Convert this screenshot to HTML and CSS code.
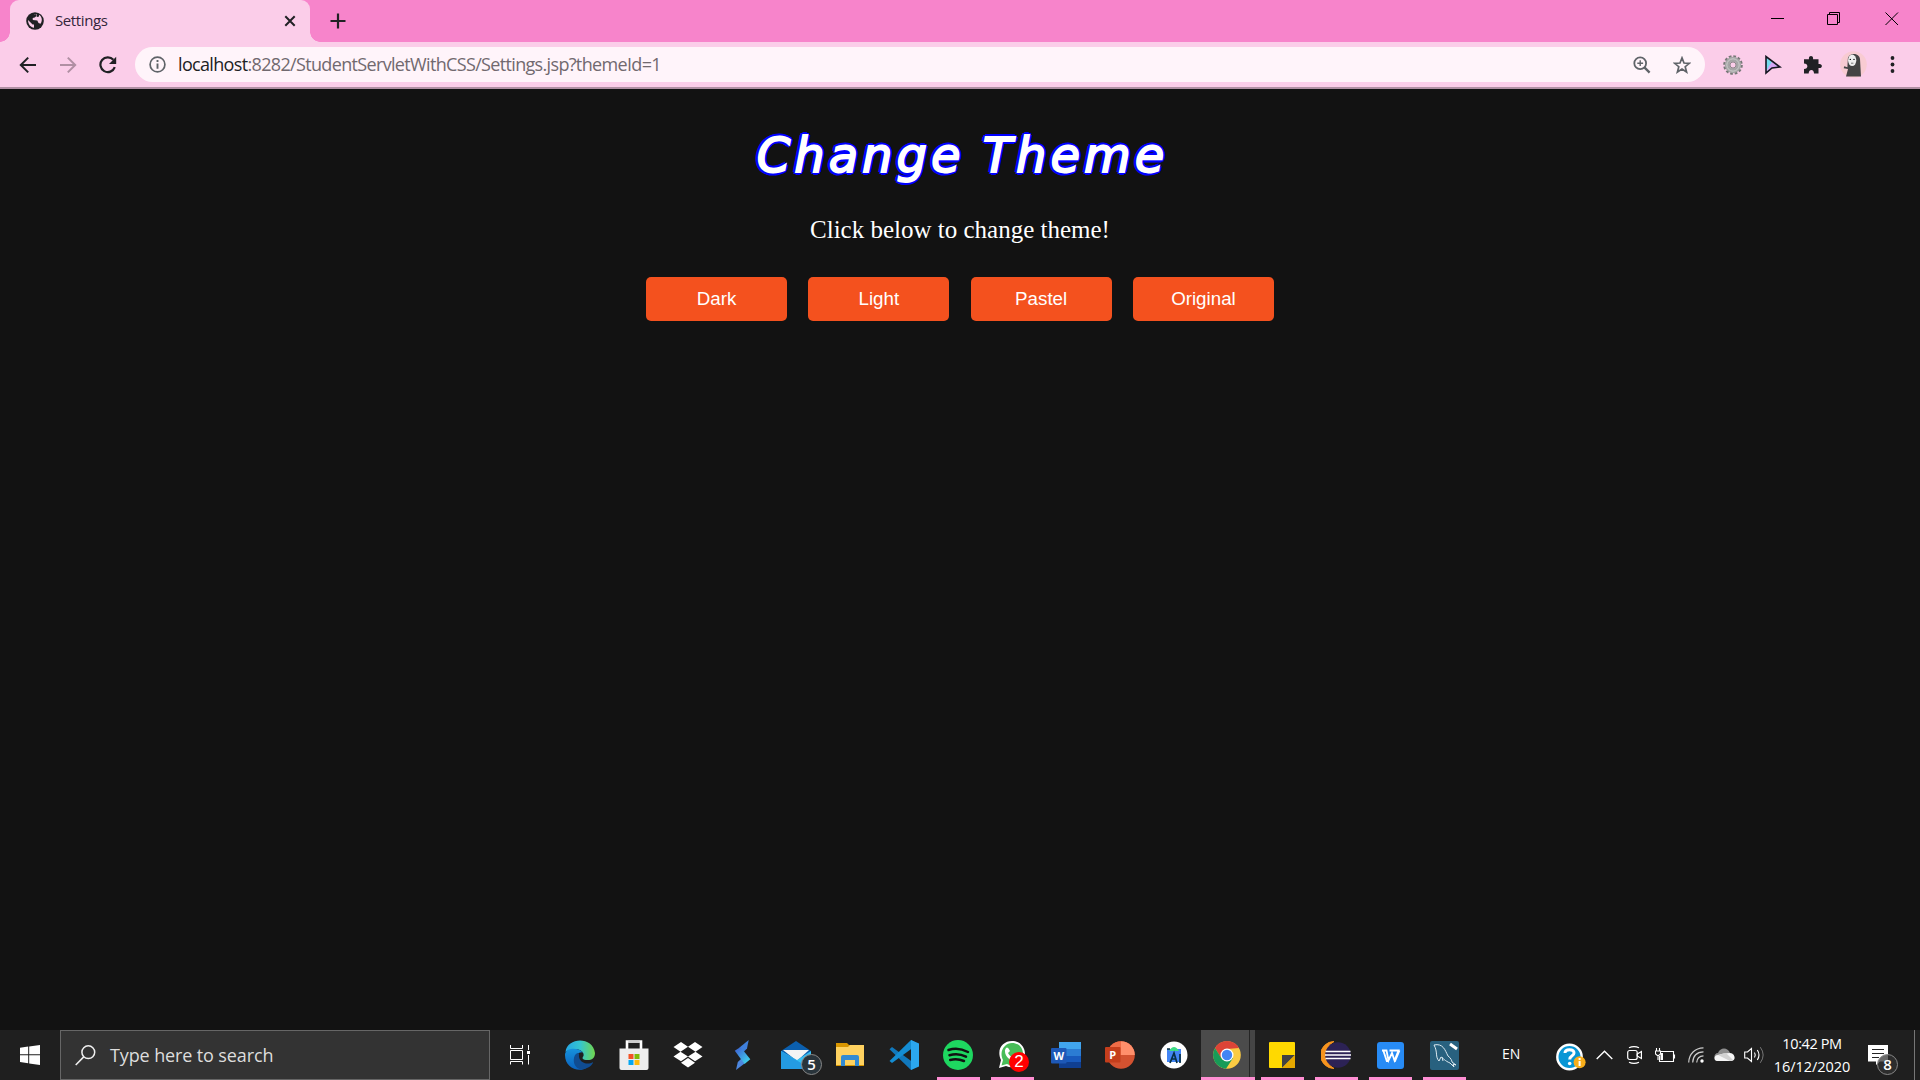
FILE: index.html
```html
<!DOCTYPE html>
<html lang="en">
<head>
<meta charset="utf-8">
<title>Settings</title>
<link rel="stylesheet" href="styles.css">
</head>
<body>
<div class="screen">
  <header class="tabstrip">
    <div class="tab">
      <svg class="globe" width="18" height="18" viewBox="0 0 18 18"><circle cx="9" cy="9" r="8.8" fill="#202124"/><path d="M2 8 L6.6 12.4 L8 12.4 L8 15.8 C4.8 15.4 2 12.5 2 8Z" fill="#fbcde9"/><path d="M8 2.2 C11 1.5 11 4.6 8.7 5.4 L6.7 6 L6.8 8 L11.3 8.5 L12.5 11 L14.5 11.8 C16.5 9 16.3 5.2 13.3 2.8 L12.7 4.7 L10.7 5 L10.8 2.2Z" fill="#fbcde9"/></svg>
      <span class="tab-title">Settings</span>
      <svg class="tab-close" width="12" height="12" viewBox="0 0 12 12"><path d="M1.3 1.3 10.7 10.7M10.7 1.3 1.3 10.7" stroke="#202124" stroke-width="2"/></svg>
    </div>
    <svg class="new-tab" width="16" height="16" viewBox="0 0 16 16"><path d="M8 .5V15.5M.5 8H15.5" stroke="#202124" stroke-width="2.2"/></svg>
    <div class="window-controls">
      <svg width="14" height="14" viewBox="0 0 14 14"><path d="M0 6.5H13" stroke="#000"/></svg>
      <svg width="14" height="14" viewBox="0 0 14 14"><path d="M.5 2.5H10.5V12.5H.5ZM2.5 2.5V.5H12.5V10.5H10.5" fill="none" stroke="#000"/></svg>
      <svg class="window-close" width="14" height="14" viewBox="0 0 14 14"><path d="M.5 .5 13 13M13 .5 .5 13" stroke="#000"/></svg>
    </div>
  </header>

  <nav class="toolbar">
    <div class="nav-buttons">
      <svg width="18" height="18" viewBox="0 0 18 18"><path d="M17 9H2M9.2 1.6 1.8 9 9.2 16.4" fill="none" stroke="#202124" stroke-width="2"/></svg>
      <svg width="18" height="18" viewBox="0 0 18 18"><path d="M1 9H16M8.8 1.6 16.2 9 8.8 16.4" fill="none" stroke="#b08fa3" stroke-width="2"/></svg>
      <svg width="18" height="18" viewBox="0 0 18 18"><path d="M14.4 3.8A7.4 7.4 0 1 0 15.8 11.2" fill="none" stroke="#202124" stroke-width="2.2"/><path d="M17.2 .8V8H10Z" fill="#202124"/></svg>
    </div>
    <div class="omnibox">
      <svg width="17" height="17" viewBox="0 0 17 17"><circle cx="8.5" cy="8.5" r="7.4" fill="none" stroke="#5f6368" stroke-width="1.7"/><path d="M8.5 4V5.9M8.5 7.4V12.8" stroke="#5f6368" stroke-width="1.9"/></svg>
      <span class="url"><span class="host">localhost</span>:8282/StudentServletWithCSS/Settings.jsp?themeId=1</span>
      <svg class="zoom-icon" width="18" height="18" viewBox="0 0 18 18"><circle cx="7.2" cy="7.2" r="5.9" fill="none" stroke="#5f6368" stroke-width="1.8"/><path d="M11.4 11.4 16.6 16.6" stroke="#5f6368" stroke-width="2.3"/><path d="M7.2 4.3V10.1M4.3 7.2H10.1" stroke="#5f6368" stroke-width="1.4"/></svg>
      <svg class="star-icon" width="18" height="18" viewBox="0 0 18 18"><path d="M9 1.9 11 7 16.4 7.3 12.2 10.7 13.6 16 9 13 4.4 16 5.8 10.7 1.6 7.3 7 7Z" fill="none" stroke="#5f6368" stroke-width="1.7"/></svg>
    </div>
    <div class="extensions">
      <svg width="22" height="22" viewBox="0 0 22 22"><circle cx="11" cy="11" r="8.3" fill="none" stroke="#777" stroke-width="3" stroke-dasharray="2.6 1.75"/><circle cx="11" cy="11" r="5.7" fill="none" stroke="#a6a6a6" stroke-width="5"/><circle cx="11" cy="11" r="6.2" fill="none" stroke="#ccc" stroke-width="1"/><circle cx="11" cy="11" r="3" fill="#fbcde9" stroke="#777" stroke-width=".8"/></svg>
      <svg class="pointer" width="18" height="20" viewBox="0 0 18 20"><path d="M2 2 8 7 6.5 11 2 16Z" fill="#74dced"/><path d="M8 7 16 12 8 13 2 18 5 11Z" fill="#d4a6f5"/><path d="M2 1.5V18L8 13 16 12Z" fill="none" stroke="#141620" stroke-width="1.6"/></svg>
      <svg width="18" height="18" viewBox="0 0 18 18"><path d="M0 3.3H5C4.1 -1 9.9 -1 9 3.3H14.5V8C19 7 19 13 14.5 12V17.6H10C10.2 12.7 4.5 12.7 4.7 17.6H0V13C4.5 13 4.5 7.5 0 7.5Z" fill="#202124"/></svg>
      <svg class="avatar" width="27" height="27" viewBox="0 0 27 27"><circle cx="13.5" cy="13.5" r="13.3" fill="#f8cbd2"/><path d="M6 25.5 8 18 3.7 17.2 4.2 15.3 7.4 16.3 7.8 8C8.5 1.4 19.2 1.4 20 8L21 25.5Z" fill="#444"/><ellipse cx="12.2" cy="9.3" rx="4.1" ry="5.8" fill="#eee"/><circle cx="10.3" cy="8.4" r=".7"/><circle cx="14" cy="8.4" r=".7"/><path d="M11 12.2H13.4" stroke="#777"/></svg>
      <svg width="5" height="17" viewBox="0 0 5 17"><g fill="#202124"><circle cx="2.5" cy="2" r="1.9"/><circle cx="2.5" cy="8.5" r="1.9"/><circle cx="2.5" cy="15" r="1.9"/></g></svg>
    </div>
  </nav>

  <main class="page">
    <h1>Change Theme</h1>
    <p>Click below to change theme!</p>
    <div class="themes">
      <button>Dark</button><button>Light</button><button>Pastel</button><button>Original</button>
    </div>
  </main>

  <footer class="taskbar">
    <div class="start"><svg width="20" height="20" viewBox="0 0 20 20"><path d="M0 2.7 8.2 1.5V9.3H0ZM9.2 1.4 20 0V9.3H9.2ZM0 10.3H8.2V18.2L0 17ZM9.2 10.3H20V20L9.2 18.4Z" fill="#fff"/></svg></div>
    <div class="search">
      <svg width="21" height="21" viewBox="0 0 21 21"><circle cx="13.3" cy="7.2" r="6.4" fill="none" stroke="#f0f0f0" stroke-width="1.5"/><path d="M8.7 11.9 .7 20" stroke="#f0f0f0" stroke-width="1.5"/></svg>
      <span>Type here to search</span>
    </div>
    <div class="task-view"><svg width="21" height="20" viewBox="0 0 21 20"><path d="M.5 0V3.5H12.5V0M.5 5.5H12.5V14.5H.5ZM.5 19.5V16.5H12.5V19.5M18.5 0V5M18.5 10V19.5" fill="none" stroke="#fff"/><path d="M17 6H20V9H17Z" fill="#fff"/></svg></div>
    <div class="apps">
      <div class="app"><svg width="30" height="30" viewBox="0 0 30 30"><defs><linearGradient id="edge-top"><stop offset="0" stop-color="#24a6e5"/><stop offset=".5" stop-color="#35c5cf"/><stop offset="1" stop-color="#70d64d"/></linearGradient><linearGradient id="edge-low" x2="0" y2="1"><stop stop-color="#1691dc"/><stop offset="1" stop-color="#0b61bd"/></linearGradient></defs><path d="M.5 12C2-3 28-4 30 13C30 19 26 20.5 21 20C17 19.7 17 18 18.5 16C20 9 8 7 .5 12Z" fill="url(#edge-top)"/><path d="M0 15C0 7 14 7 18.4 13C16 10.5 10 14 10 20C11 26 19 29 22 28C12 33 0 27 0 15Z" fill="url(#edge-low)"/><path d="M10 15C6 23 12 33 22 28C25 27 28 24 28 22C22 26 13 22 14 15C14 12 12 13 10 15Z" fill="#104c91"/></svg></div>
      <div class="app"><svg width="30" height="30" viewBox="0 0 30 30"><path d="M8 10V1.5H22V10" fill="none" stroke="#fff" stroke-width="2.6"/><path d="M9.3 1H20.7V3H9.3Z" fill="#ccc"/><path d="M.5 8.5H29.5V28Q29.5 30 27.5 30H2.5Q.5 30 .5 28Z" fill="#ededed"/><path d="M9.5 14H14.5V19H9.5Z" fill="#f35325"/><path d="M15.5 14H20.5V19H15.5Z" fill="#81bc06"/><path d="M9.5 20H14.5V25H9.5Z" fill="#05a6f0"/><path d="M15.5 20H20.5V25H15.5Z" fill="#ffba08"/></svg></div>
      <div class="app"><svg width="30" height="30" viewBox="0 0 30 30"><path d="M.5 7 8 2 15 6.7 7.5 11.7ZM15 6.7 22 2 29.5 7 22.5 11.7ZM.5 16.5 7.5 11.7 15 16.5 8 21.3ZM15 16.5 22.5 11.7 29.5 16.5 22 21.3ZM8 22.8 15 18.1 22 22.8 15 27.5Z" fill="#fff"/></svg></div>
      <div class="app"><svg width="30" height="30" viewBox="0 0 30 30"><defs><linearGradient id="ribbon" x2="1" y2="1"><stop offset=".2" stop-color="#3e72d7"/><stop offset="1" stop-color="#40e3ef"/></linearGradient></defs><path d="M21.7 0 20 8.5 16.5 12 12.5 7.5Z" fill="#3f80dc"/><path d="M9 30 10.8 22 14.5 18.5 17.5 23.5Z" fill="#4d87df"/><path d="M7.8 10.8 13.5 7 23.3 19.2 17.5 24Z" fill="url(#ribbon)"/></svg></div>
      <div class="app"><svg width="30" height="30" viewBox="0 0 30 30"><path d="M0 11 15 1 30 11V18H0Z" fill="#0b5fae"/><path d="M2 10H28L16 21Z" fill="#f4f4f4"/><path d="M0 11 16 20 30 11V29H0Z" fill="#36bff3"/><path d="M0 11 30 29H0Z" fill="#249be2"/></svg><span class="mail-badge">5</span></div>
      <div class="app"><svg width="30" height="30" viewBox="0 0 30 30"><path d="M1 3H12L14 5H29V26H1Z" fill="#d99600"/><path d="M1 7H13L15 5H29V25H1Z" fill="#ffd260"/><path d="M6 26V17Q6 15 8 15H22Q24 15 24 17V26H20V20H10V26Z" fill="#338bd2"/></svg></div>
      <div class="app"><svg width="30" height="30" viewBox="0 0 30 30"><path d="M.5 9.2 3 7 29 26 22 30Z" fill="#1178bc"/><path d="M.5 21 3 23 29 4 22 0Z" fill="#148dd3"/><path d="M22 0 30 3.5V26.5L22 30Z" fill="#2ba7ef"/></svg></div>
      <div class="app running"><svg width="30" height="30" viewBox="0 0 30 30"><circle cx="15" cy="15" r="15" fill="#1ed760"/><path d="M5.5 10Q15 6.5 25 12M6.5 15.2Q15 12.5 23 16.7M7.2 20Q14 18 21 21" fill="none" stroke="#111" stroke-width="2.5" stroke-linecap="round"/></svg></div>
      <div class="app running"><svg width="30" height="30" viewBox="0 0 30 30"><path d="M2 28 4 20C-1 9 6 1 15 1C23 1 28 7 28 14C28 24 18 30 9 26Z" fill="#fff"/><path d="M4.5 25.5 6 20C1.5 11 8 3 15 3C22 3 26 8 26 14C26 22 17 28 10 24Z" fill="#48bd58"/><path d="M9 8Q11 6 13 11L11 13Q13 17 17 18L19 16 23 18C22 25 7 20 8 10Z" fill="#fff"/></svg><span class="red-badge">2</span></div>
      <div class="app"><svg width="30" height="28" viewBox="0 0 30 28"><path d="M8 1H30V8H8Z" fill="#41a5ee"/><path d="M8 8H30V15H8Z" fill="#2b7cd3"/><path d="M8 15H30V21H8Z" fill="#185abd"/><path d="M8 21H30V27H8Z" fill="#103f91"/><rect x="0" y="7" width="15.5" height="15.5" rx="1" fill="#1d58b7"/><text class="logo-letter" x="7.8" y="18.7">W</text></svg></div>
      <div class="app"><svg width="30" height="28" viewBox="0 0 30 28"><circle cx="16" cy="14" r="13.8" fill="#d35230"/><path d="M16 .2V14H29.8A13.8 13.8 0 0 0 16 .2Z" fill="#ff8f6b"/><path d="M16 .2A13.8 13.8 0 0 0 2.2 14H16Z" fill="#ed6c47"/><rect y="6" width="15.5" height="15.5" rx="1" fill="#c43e1c"/><text class="logo-letter" x="7.8" y="18">P</text></svg></div>
      <div class="app"><svg width="28" height="28" viewBox="0 0 28 28"><circle cx="14" cy="14" r="13.5" fill="#fff"/><path d="M7 8H21V21H7Z" fill="#4285f4"/><path d="M9 10Q14 2 19 10Z" fill="#3ddc84"/><path d="M7 8H10M10 22 14 12 17 22M20 13V22M11.5 18H16" fill="none" stroke="#083042" stroke-width="1.7"/></svg></div>
      <div class="app chrome-app"><svg width="28" height="28" viewBox="0 0 28 28"><circle cx="14" cy="14" r="13.8" fill="#fbcb43"/><path d="M2 7A13.8 13.8 0 0 1 26 7L14 8 8 17Z" fill="#dc4437"/><path d="M2 7A13.8 13.8 0 0 0 13 27.8L20 17 8.5 17.5Z" fill="#179b58"/><circle cx="14" cy="14" r="6.5" fill="#fff"/><circle cx="14" cy="14" r="5.2" fill="#4285f4"/></svg></div>
      <div class="app running"><svg width="26" height="26" viewBox="0 0 26 26"><rect width="26" height="26" rx="1" fill="#ffd900"/><path d="M13 26V13H26Z" fill="#424242"/><path d="M13 26 26 13V26Z" fill="#e6a800"/></svg></div>
      <div class="app running"><svg width="30" height="28" viewBox="0 0 30 28"><path d="M13 .5A13.5 13.5 0 0 0 13 27.5C2 21 2 7 13 .5Z" fill="#f7941e" stroke="#f7941e"/><circle cx="17" cy="14" r="12.8" fill="#2c2255"/><path d="M4.5 10.5H29.5M4 14H30M4.5 17.5H29.5" stroke="#fff" stroke-width="1.7"/></svg></div>
      <div class="app running"><svg width="27" height="27" viewBox="0 0 27 27"><rect width="27" height="27" rx="3" fill="#278bf5"/><path d="M5 8.5H9.5L11.5 18.5 15 11 17.5 18.5 21.5 8.5H12.5M6.3 8.5 9.8 19H11.5M17 19H18L22.5 8.5" fill="none" stroke="#fff" stroke-width="1.8"/></svg></div>
      <div class="app running"><svg width="29" height="29" viewBox="0 0 29 29"><rect width="29" height="29" rx="2" fill="#28617f"/><path d="M4 4C13 2 15 9 18 15C21 17 22 20 22 21L26 24 23 23 24 26 20 22C15 20 13 17 11 16L9 20C5 16 8 11 4 4ZM12 16 13 20" fill="none" stroke="#dceaf1"/><path d="M20 3 27 8" stroke="#fff" stroke-width="3"/></svg></div>
    </div>
    <div class="tray">
      <span class="language">EN</span>
      <svg class="help" width="30" height="28" viewBox="0 0 30 28"><circle cx="13.5" cy="14" r="12.2" fill="#0896d5" stroke="#fff" stroke-width="2.4"/><path d="M9 10Q9 6.7 13.5 6.7Q18 6.7 18 10C18 13 13.7 12.5 13.7 16.5" fill="none" stroke="#fff" stroke-width="3"/><circle cx="13.7" cy="20.5" r="1.8" fill="#fff"/><circle cx="23.6" cy="19.3" r="6" fill="#f8ae1a"/><path d="M23.6 15V17M23.6 18V23" stroke="#fff" stroke-width="2"/></svg>
      <svg class="chevron" width="17" height="10" viewBox="0 0 17 10"><path d="M.7 9 8.5 1.2 16.3 9" fill="none" stroke="#fff" stroke-width="1.4"/></svg>
      <svg class="meet" width="16" height="18" viewBox="0 0 16 18"><rect x=".7" y="4.5" width="9.5" height="9" rx="2" fill="none" stroke="#fff" stroke-width="1.2"/><path d="M10.2 8 14.4 5.5V12.5L10.2 10ZM2 1.8Q7 -.6 12 1.8M2 16.2Q7 18.6 12 16.2" fill="none" stroke="#fff" stroke-width="1.2"/></svg>
      <svg class="battery" width="21" height="15" viewBox="0 0 21 15"><path d="M6 3.5H18.5V13.5H4.5V8M19.5 6.5V10.5M1.5 0V3M4.5 0V3M.5 3H5.5V6L3 8 .5 6ZM3 8V12" fill="none" stroke="#fff" stroke-width="1.1"/><path d="M5.5 5H8V12H5.5Z" fill="#fff"/></svg>
      <svg class="wifi" width="17" height="16" viewBox="0 0 17 16"><path d="M.7 15.5C1 7 7 1 15.5.8M4.7 15.5C5 9 9 5 15.5 4.8M8.7 15.5C9 11 11 9 15.5 8.8" fill="none" stroke="#ccc" stroke-width="1.2"/><circle cx="14" cy="14" r="1.7" fill="#fff"/></svg>
      <svg class="cloud" width="21" height="14" viewBox="0 0 21 14"><path d="M3 12C-1 11 0 5 4 5C6-1 14-1 16 5C20 5 21 9 19 11Z" fill="#8f8f8f"/><path d="M3 13C-1 12 0 7 4 7Q9 5 16 5C22 6 22 13 17 13Z" fill="#f5f5f5"/><path d="M4 7 12 5 19 12 16 13Z" fill="#d2d2d2"/></svg>
      <svg class="speaker" width="21" height="18" viewBox="0 0 21 18"><path d="M.7 6H3.5L7.5 2.5V15.5L3.5 12H.7Z" fill="none" stroke="#fff" stroke-width="1.1"/><path d="M10.5 6.5Q12 9 10.5 11.5M13.3 4Q16.7 9 13.3 14" fill="none" stroke="#fff" stroke-width="1.1"/><path d="M16.3 1.2Q22 9 16.3 16.8" fill="none" stroke="#777"/></svg>
      <div class="clock"><span>10:42 PM</span><span class="date">16/12/2020</span></div>
      <div class="notifications"><svg width="20" height="21" viewBox="0 0 20 21"><path d="M0 0H20V16.5H12L8 20V16.5H0Z" fill="#fff"/><path d="M4 4.5H16M4 8.5H16M4 12.5H11" stroke="#242424" stroke-width="1.1"/></svg><span class="note-badge">8</span></div>
      <div class="show-desktop"></div>
    </div>
  </footer>
</div>
</body>
</html>
```
FILE: styles.css
```css
* { box-sizing: border-box; }
body { margin: 0; background: #121212; color: #fff; }
svg { display: block; flex: none; }
.screen { width: 1920px; height: 1080px; display: flex; flex-direction: column; overflow: hidden; }

.tabstrip { height: 42px; flex: none; background: #f784cb; display: flex; align-items: center; padding-left: 10px; }
.tab { position: relative; width: 300px; height: 42px; background: #fbcde9; border-radius: 9px 9px 0 0; display: flex; align-items: center; padding: 0 14px 0 16px; font: 15px "Open Sans", sans-serif; color: #33263a; }
.tab::before, .tab::after { content: ""; position: absolute; bottom: 0; width: 10px; height: 10px; }
.tab::before { left: -10px; background: radial-gradient(circle at 0 0, #f784cb 9.5px, #fbcde9 10px); }
.tab::after { right: -10px; background: radial-gradient(circle at 100% 0, #f784cb 9.5px, #fbcde9 10px); }
.tab-title { margin: -2px 0 0 11px; letter-spacing: -.4px; }
.tab-close { margin-left: auto; }
.new-tab { margin-left: 20px; }
.window-controls { display: flex; gap: 42px; margin: -5px 0 0 auto; padding-right: 21px; }
.window-close { margin-left: 2px; }

.toolbar { height: 47px; flex: none; background: #fbcde9; border-bottom: 2px solid #b08fa3; display: flex; align-items: center; padding-left: 19px; }
.nav-buttons { display: flex; gap: 22px; width: 116px; }
.omnibox { width: 1570px; height: 35px; border-radius: 18px; background: #fff4fa; display: flex; align-items: center; padding: 0 14px; }
.url { margin: -2px 0 0 12px; font: 18px "Open Sans", sans-serif; letter-spacing: -.66px; color: #71696f; white-space: nowrap; }
.host { color: #202124; }
.zoom-icon { margin-left: auto; }
.star-icon { margin-left: 22px; }
.extensions { display: flex; align-items: center; flex: 1; justify-content: space-between; padding: 0 25px 0 17px; }
.pointer { margin: 0 1px 0 -1px; }
.avatar { margin: 0 2px 0 -2px; }

.page { flex: 1; display: flex; flex-direction: column; align-items: center; }
h1 {
  margin: 35px 0 0;
  padding-left: 5px;
  font: italic 400 48px/62px "DejaVu Sans", sans-serif;
  letter-spacing: 4px;
  word-spacing: -1px;
  -webkit-text-stroke: 1.8px #fff;
  text-shadow: 3px 0 #00f, -3px 0 #00f, 0 3px #00f, 0 -3px #00f, 2.1px 2.1px #00f, -2.1px 2.1px #00f, 2.1px -2.1px #00f, -2.1px -2.1px #00f;
}
p { margin: 29px 0 0; font: 25px/29px "Liberation Serif", serif; }
.themes { display: flex; gap: 21.3px; margin-top: 33px; }
button { width: 141px; height: 44px; border: 0; border-radius: 5px; background: #f4511e; color: #fff; font: 18.75px "Liberation Sans", sans-serif; padding: 0; }

.taskbar { height: 50px; flex: none; background: #1f1f1f; display: flex; font-family: "Open Sans", sans-serif; }
.start { width: 60px; flex: none; display: flex; align-items: center; justify-content: center; }
.search { width: 430px; flex: none; background: #333; border: 1px solid #666; display: flex; align-items: center; padding-left: 14px; gap: 14px; color: #ddd; font-size: 18px; letter-spacing: -.12px; }
.task-view { width: 63px; flex: none; display: flex; align-items: center; justify-content: center; padding-right: 3px; }
.apps { display: flex; flex: none; }
.app { position: relative; width: 54px; height: 50px; display: flex; align-items: center; justify-content: center; }
.running::after { content: ""; position: absolute; left: 6px; bottom: 0; width: 43px; height: 3px; background: #ff8fd3; }
.chrome-app { background: linear-gradient(90deg, #4b4b4b 48px, #252525 48px, #252525 49px, #454545 49px); border-bottom: 3px solid #ff8fd3; padding: 3px 3px 0 0; }
.logo-letter { font: 700 11px "Open Sans", sans-serif; fill: #fff; text-anchor: middle; }
.mail-badge, .red-badge, .note-badge { position: absolute; border-radius: 50%; text-align: center; width: 21px; height: 21px; font-size: 15px; line-height: 19px; border: 1px solid #888; background: #333b; color: #fff; }
.mail-badge { left: 32px; top: 24px; font-weight: 600; background: #29343b; }
.red-badge { left: 24px; top: 22px; width: 20px; height: 20px; border: 0; background: #f00; font: 17px/20px "Liberation Sans", sans-serif; }

.tray { display: flex; align-items: center; flex: 1; padding-left: 31px; }
.language { width: 54px; flex: none; font-size: 14px; margin-top: -4px; }
.help { margin-top: 3px; }
.chevron { margin-left: 10px; }
.meet { margin-left: 14px; }
.battery { margin-left: 12px; }
.wifi { margin-left: 12px; }
.cloud { margin-left: 9px; }
.speaker { margin-left: 9px; }
.clock { width: 78px; flex: none; margin-left: 8px; display: flex; flex-direction: column; align-items: center; font-size: 14.5px; line-height: 23px; letter-spacing: -.4px; white-space: nowrap; }
.date { letter-spacing: -.05px; }
.notifications { position: relative; flex: none; margin-left: 17px; width: 46px; height: 50px; padding-top: 15px; }
.note-badge { left: 9px; top: 24px; font-weight: 600; }
.show-desktop { width: 6px; height: 50px; border-left: 1px solid #777; margin-left: auto; }
```
